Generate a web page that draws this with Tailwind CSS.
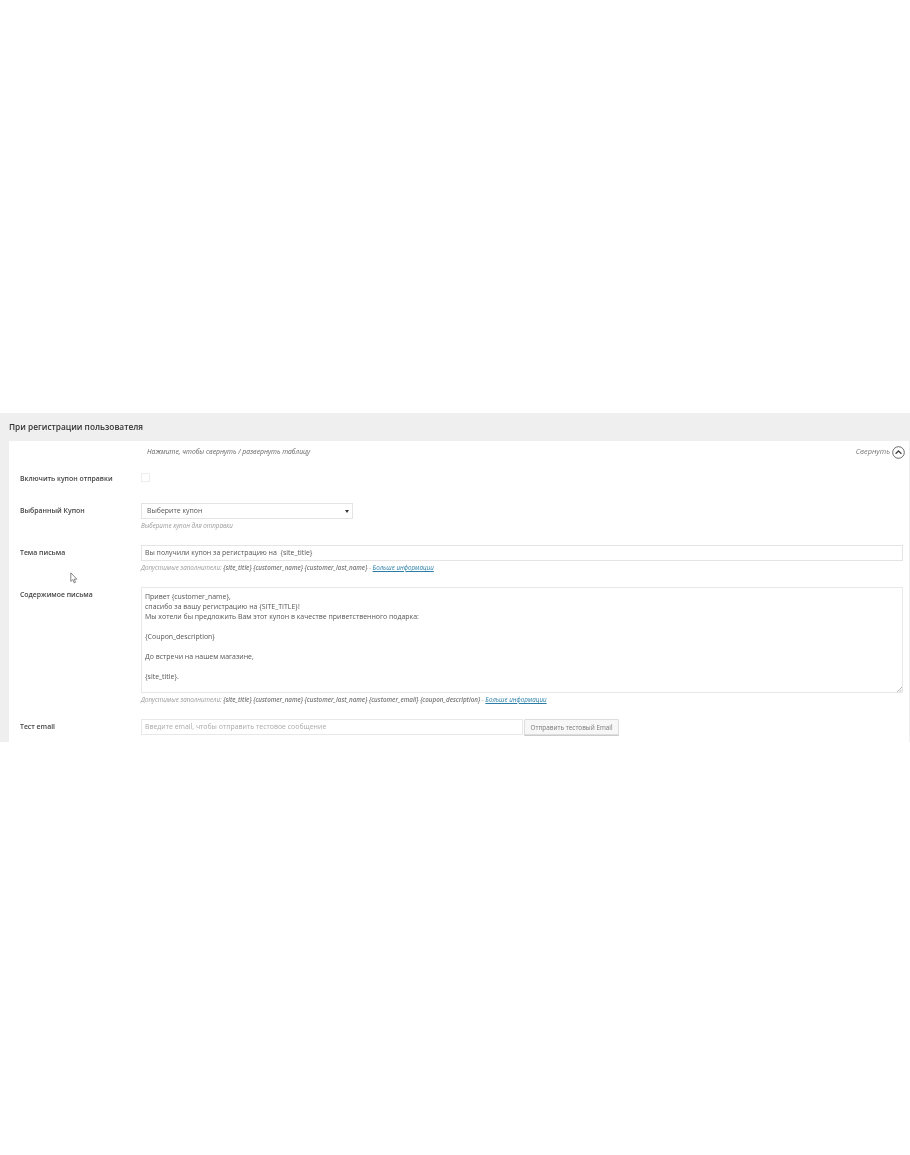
<!DOCTYPE html>
<html lang="ru">
<head>
<meta charset="UTF-8">
<meta name="viewport" content="width=device-width, initial-scale=1.0">
<title>При регистрации пользователя</title>
<script src="https://cdn.jsdelivr.net/npm/@tailwindcss/browser@4"></script>
</head>
<body class="bg-white font-['Open_Sans',sans-serif] text-[#444] overflow-hidden">
<div class="h-[1155px] pt-[413px] relative">
  <section class="bg-[#efefef] h-[329px] pl-[9px] pr-px blur-[0.5px]">
    <h2 class="h-[28px] pt-[1px] flex items-center text-[8.3px] font-semibold text-[#333]">При регистрации пользователя</h2>
    <div class="bg-white h-[301px] pl-[11px] pr-[6px] flex flex-col">
      <div class="h-[22px] shrink-0 flex items-center justify-between pl-[127px] -mr-[2px] text-[6.75px] italic text-[#666]">
        <span>Нажмите, чтобы свернуть / развернуть таблицу</span>
        <span class="flex items-center gap-[2px] text-[7.4px] text-[#777]">Свернуть
          <svg class="w-[13px] h-[13px]" viewBox="0 0 13 13" fill="none" stroke="#444"><circle cx="6.5" cy="6.5" r="5.8" stroke-width="0.8"/><path d="M3.6 7.8 6.5 5l2.9 2.8" stroke-width="1.3"/></svg>
        </span>
      </div>

      <div class="flex h-[32px] shrink-0 pt-[10px]">
        <div class="w-[121px] text-[6.9px] font-semibold leading-[10px] text-[#444] pt-[1px]">Включить купон отправки</div>
        <div class="w-[9px] h-[9px] border border-[#eee] bg-white"></div>
      </div>

      <div class="flex h-[50px] shrink-0 pt-[8px]">
        <div class="w-[121px] text-[6.9px] font-semibold leading-[10px] text-[#444] pt-[3px]">Выбранный Купон</div>
        <div>
          <div class="w-[212px] h-[16px] border border-[#e4e4e4] flex items-center justify-between pl-[5px] pr-[3px] pt-px text-[6.95px] text-[#555]">
            <span>Выберите купон</span>
            <span class="w-0 h-0 border-x-[2px] border-x-transparent border-t-[3px] border-t-[#333]"></span>
          </div>
          <p class="mt-[2px] text-[6.25px] italic leading-[9px] text-[#999]">Выберите купон для отправки</p>
        </div>
      </div>

      <div class="flex h-[42px] shrink-0">
        <div class="w-[121px] text-[6.9px] font-semibold leading-[10px] text-[#444] pt-[3px]">Тема письма</div>
        <div class="flex-1">
          <div class="h-[16px] border border-[#e4e4e4] flex items-center pl-[3px] pt-px text-[6.95px] text-[#555]">Вы получили купон за регистрацию на&nbsp; {site_title}</div>
          <p class="mt-[2px] text-[6.25px] italic leading-[9px] text-[#999]">Допустимые заполнители: <b class="font-semibold text-[#777]">{site_title} {customer_name} {customer_last_name}</b> - <a class="underline text-[#2a7ea6]">Больше информации</a></p>
        </div>
      </div>

      <div class="flex h-[132px] shrink-0">
        <div class="w-[121px] text-[6.9px] font-semibold leading-[10px] text-[#444] pt-[3px]">Содержимое письма</div>
        <div class="flex-1">
          <div class="h-[106px] border border-[#e8e8e8] pl-[3px] pt-[4px] text-[6.95px] leading-[10px] text-[#555] relative">
            <p>Привет {customer_name},</p>
            <p>спасибо за вашу регистрацию на {SITE_TITLE}!</p>
            <p>Мы хотели бы предложить Вам этот купон в качестве приветственного подарка:</p>
            <p class="mt-[10px]">{Coupon_description}</p>
            <p class="mt-[10px]">До встречи на нашем магазине,</p>
            <p class="mt-[10px]">{site_title}.</p>
            <svg class="absolute right-0 bottom-0 w-[5px] h-[5px]" viewBox="0 0 5 5" stroke="#888" stroke-width="0.6"><path d="M0 5 5 0M2.5 5 5 2.5"/></svg>
          </div>
          <p class="mt-[2px] text-[6.25px] italic leading-[9px] text-[#999]">Допустимые заполнители: <b class="font-semibold text-[#777]">{site_title} {customer_name} {customer_last_name} {customer_email} {coupon_description}</b> - <a class="underline text-[#2a7ea6]">Больше информации</a></p>
        </div>
      </div>

      <div class="flex shrink-0">
        <div class="w-[121px] text-[6.9px] font-semibold leading-[10px] text-[#444] pt-[3px]">Тест email</div>
        <div class="flex gap-px">
          <div class="w-[382px] h-[16px] border border-[#e8e8e8] flex items-center pl-[3px] pt-px text-[6.93px] text-[#aaa]">Введите email, чтобы отправить тестовое сообщение</div>
          <button class="w-[95px] h-[16px] border border-[#ddd] rounded-[1px] bg-[#f7f7f7] shadow-[0_1px_0_#ccc] pt-px text-[6.35px] text-[#777]">Отправить тестовый Email</button>
        </div>
      </div>
    </div>
  </section>
  <svg class="absolute left-[70px] top-[572px] w-[8px] h-[12px]" viewBox="0 0 8 12" fill="#fff" stroke="#555" stroke-width="0.7"><path d="M.8.8v8.6l2-1.8 1.3 3.2 1.4-.6-1.3-3h2.6z"/></svg>
</div>
</body>
</html>
